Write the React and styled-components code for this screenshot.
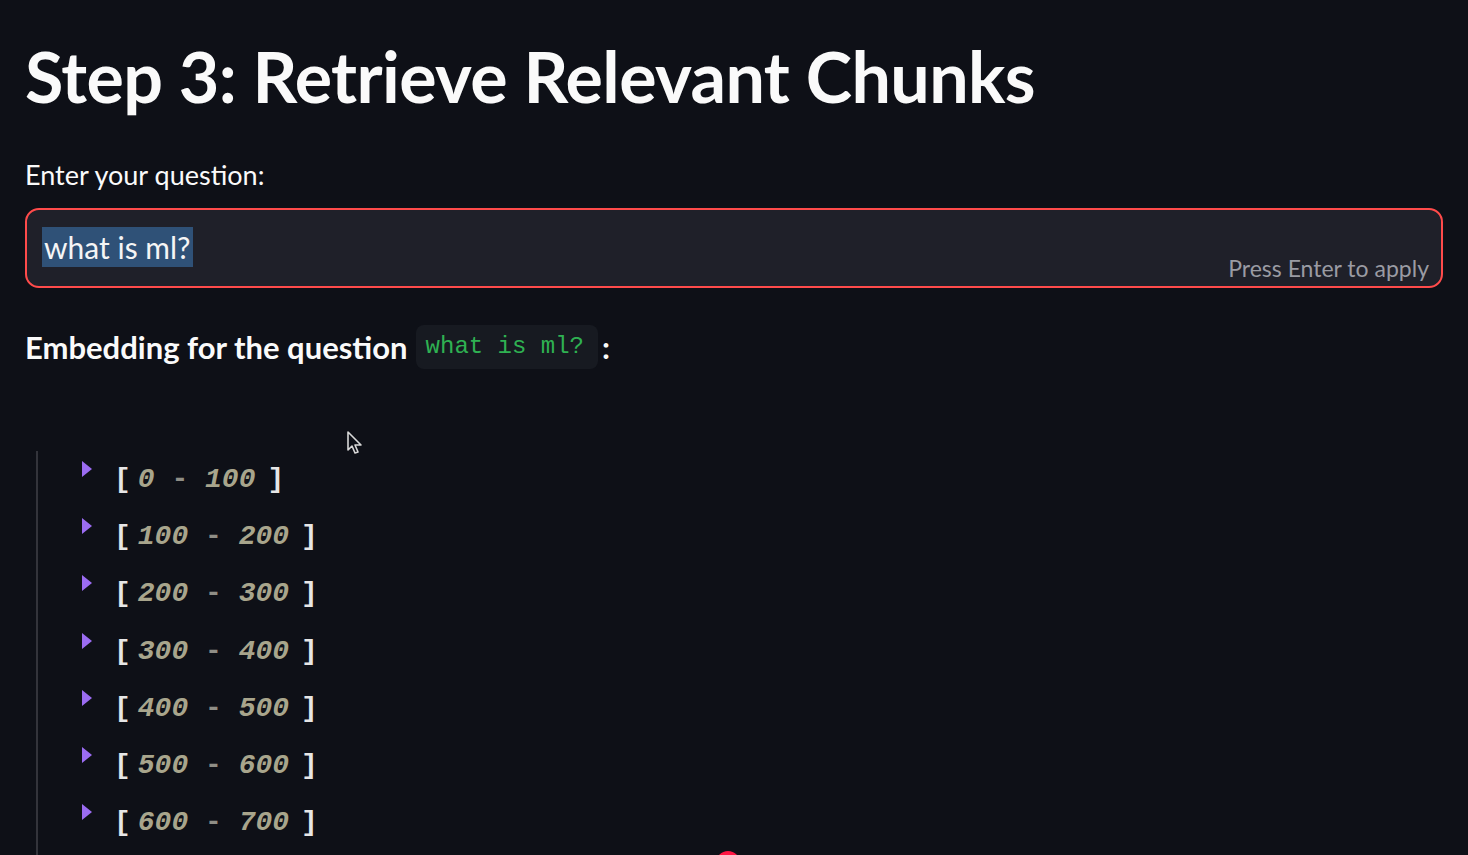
import styled, { createGlobalStyle } from 'styled-components'

const Global = createGlobalStyle`
    html, body {
        margin: 0;
        padding: 0;
        background: #0e1017;
        height: 100%;
        overflow: hidden;
    }
    body {
        font-family: 'Lato', 'Noto Sans', sans-serif;
        color: #fafafa;
    }
`

const Page = styled.div`
    position: relative;
    width: 1468px;
    height: 855px;
    overflow: hidden;
    padding: 0 25px;
    box-sizing: border-box;
`

const Title = styled.h1`
    margin: 0;
    padding-top: 35px;
    font-size: 70px;
    font-weight: 700;
    line-height: 82px;
    letter-spacing: -0.6px;
    color: #fafafa;
`

const Label = styled.div`
    margin-top: 41px;
    font-size: 27px;
    line-height: 34px;
    color: #fafafa;
`

const InputBox = styled.div`
    position: relative;
    margin-top: 16px;
    height: 80px;
    border: 2px solid #ff4b4b;
    border-radius: 14px;
    background: #1f2029;
    box-sizing: border-box;
    display: flex;
    align-items: center;
    padding: 0 15px 2px;
`

const Selected = styled.span`
    font-size: 30px;
    line-height: 40px;
    background: #2f5177;
    color: #f5f5f5;
    padding: 0 2px;
`

const Hint = styled.span`
    position: absolute;
    right: 12px;
    bottom: 4px;
    font-size: 23px;
    color: #9a9ba3;
`

const SubHead = styled.div`
    margin-top: 36px;
    display: flex;
    align-items: center;
    font-size: 31px;
    font-weight: 700;
    line-height: 46px;
    color: #fafafa;
`

const Code = styled.code`
    margin-left: 8px;
    margin-right: 4px;
    padding: 2px 14px 2px 10px;
    border-radius: 8px;
    background: #171a21;
    color: #2fb152;
    font-family: 'Liberation Mono', monospace;
    font-size: 24px;
    font-weight: 400;
    line-height: 40px;
`

const Tree = styled.div`
    margin-top: 81px;
    margin-left: 11px;
    border-left: 2px solid #33343b;
    padding-left: 44px;
    padding-top: 6px;
    height: 500px;
`

const Row = styled.div`
    display: flex;
    align-items: flex-start;
    height: 57.2px;
`

const Arrow = styled.span`
    width: 0;
    height: 0;
    margin-top: 4px;
    border-top: 8px solid transparent;
    border-bottom: 8px solid transparent;
    border-left: 10px solid #9b6cf2;
`

const Range = styled.span`
    margin-left: 22px;
    margin-top: 6px;
    font-family: 'Liberation Mono', monospace;
    font-size: 28px;
    line-height: 34px;
    font-weight: 700;
    color: #e6e6e6;
    white-space: pre;
`

const Nums = styled.span`
    margin: 0 12px 0 7px;
    font-style: italic;
    color: #a8a58c;
`

const Dash = styled.span`
    color: #8f8e86;
    font-style: normal;
`

const Cursor = styled.svg`
    position: absolute;
    left: 346px;
    top: 430px;
`

const RecDot = styled.div`
    position: absolute;
    left: 716px;
    top: 851px;
    width: 24px;
    height: 24px;
    border-radius: 50%;
    background: #ff1744;
`

const ranges = [
    [0, 100],
    [100, 200],
    [200, 300],
    [300, 400],
    [400, 500],
    [500, 600],
    [600, 700],
]

const App = () => {
    return (
        <>
            <Global />
            <Page>
                <Title>Step 3: Retrieve Relevant Chunks</Title>
                <Label>Enter your question:</Label>
                <InputBox>
                    <Selected>what is ml?</Selected>
                    <Hint>Press Enter to apply</Hint>
                </InputBox>
                <SubHead>
                    Embedding for the question <Code>what is ml?</Code>:
                </SubHead>
                <Tree>
                    {ranges.map(([a, b]) => (
                        <Row key={a}>
                            <Arrow />
                            <Range>
                                [<Nums>{a} <Dash>-</Dash> {b}</Nums>]
                            </Range>
                        </Row>
                    ))}
                </Tree>
                <Cursor width="18" height="26" viewBox="0 0 18 26">
                    <path d="M2 2 L2 20 L6 16 L9 23 L12 22 L9 15 L15 15 Z" fill="#0e1017" stroke="#d8d8d8" strokeWidth="1.6" strokeLinejoin="round" />
                </Cursor>
                <RecDot />
            </Page>
        </>
    )
}

export default App
